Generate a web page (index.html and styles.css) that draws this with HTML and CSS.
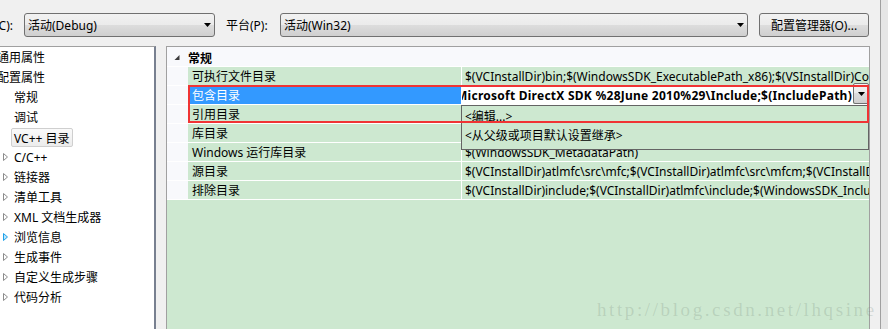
FILE: index.html
```html
<!DOCTYPE html>
<html>
<head>
<meta charset="utf-8">
<link rel="stylesheet" href="styles.css">
</head>
<body>
<div class="main">
  <div class="toolbar">
    <div class="tlabel"><span>配置(C):</span></div>
    <div class="combo c1"><span>活动(Debug)</span><svg class="arr" width="7" height="4" viewBox="0 0 7 4"><polygon points="0,0 7,0 3.5,4" fill="#000"/></svg></div>
    <div class="plabel">平台(P):</div>
    <div class="combo c2"><span>活动(Win32)</span><svg class="arr" width="7" height="4" viewBox="0 0 7 4"><polygon points="0,0 7,0 3.5,4" fill="#000"/></svg></div>
    <div class="btn">配置管理器(O)...</div>
  </div>
  <div class="panes">
    <div class="tree">
      <div class="ti top"><span class="tt">通用属性</span></div>
      <div class="ti top"><span class="tt">配置属性</span></div>
      <div class="ti"><span class="tw"></span><span class="tt">常规</span></div>
      <div class="ti"><span class="tw"></span><span class="tt">调试</span></div>
      <div class="ti"><span class="selbox">VC++ 目录</span></div>
      <div class="ti"><span class="tw"><svg width="5" height="8" viewBox="0 0 5 8"><polygon points="0.5,0.5 4.5,4 0.5,7.5" fill="#fff" stroke="#8c8c8c"/></svg></span><span class="tt">C/C++</span></div>
      <div class="ti"><span class="tw"><svg width="5" height="8" viewBox="0 0 5 8"><polygon points="0.5,0.5 4.5,4 0.5,7.5" fill="#fff" stroke="#8c8c8c"/></svg></span><span class="tt">链接器</span></div>
      <div class="ti"><span class="tw"><svg width="5" height="8" viewBox="0 0 5 8"><polygon points="0.5,0.5 4.5,4 0.5,7.5" fill="#fff" stroke="#8c8c8c"/></svg></span><span class="tt">清单工具</span></div>
      <div class="ti"><span class="tw"><svg width="5" height="8" viewBox="0 0 5 8"><polygon points="0.5,0.5 4.5,4 0.5,7.5" fill="#fff" stroke="#8c8c8c"/></svg></span><span class="tt">XML 文档生成器</span></div>
      <div class="ti"><span class="tw"><svg width="5" height="8" viewBox="0 0 5 8"><polygon points="0.5,0.5 4.5,4 0.5,7.5" fill="#bfe6fb" stroke="#1ca0e8"/></svg></span><span class="tt">浏览信息</span></div>
      <div class="ti"><span class="tw"><svg width="5" height="8" viewBox="0 0 5 8"><polygon points="0.5,0.5 4.5,4 0.5,7.5" fill="#fff" stroke="#8c8c8c"/></svg></span><span class="tt">生成事件</span></div>
      <div class="ti"><span class="tw"><svg width="5" height="8" viewBox="0 0 5 8"><polygon points="0.5,0.5 4.5,4 0.5,7.5" fill="#fff" stroke="#8c8c8c"/></svg></span><span class="tt">自定义生成步骤</span></div>
      <div class="ti"><span class="tw"><svg width="5" height="8" viewBox="0 0 5 8"><polygon points="0.5,0.5 4.5,4 0.5,7.5" fill="#fff" stroke="#8c8c8c"/></svg></span><span class="tt">代码分析</span></div>
    </div>
    <div class="grid">
      <div class="cat"><span class="gut"><svg width="6" height="5" viewBox="0 0 6 5"><polygon points="5.5,0 5.5,5 0.5,5" fill="#3c3c3c"/></svg></span><b>常规</b></div>
      <div class="row"><span class="gut"></span><span class="name">可执行文件目录</span><span class="val">$(VCInstallDir)bin;$(WindowsSDK_ExecutablePath_x86);$(VSInstallDir)Common7\Tools\bin;$(VSInstallDir)Common7\tools;$(VSInstallDir)Common7\ide;$(ProgramFiles)\HTML Help Workshop</span></div>
      <div class="row sel"><span class="gut"></span><span class="name">包含目录</span><span class="val edit"><span class="etext"><span>C:\Program Files (x86)\Microsoft DirectX SDK %28June 2010%29\Include;$(IncludePath)</span></span><span class="dbtn"><svg width="7" height="4" viewBox="0 0 7 4"><polygon points="0,0 7,0 3.5,4" fill="#000"/></svg></span></span></div>
      <div class="row"><span class="gut"></span><span class="name">引用目录</span><span class="val">$(VCInstallDir)atlmfc\lib;$(VCInstallDir)lib</span></div>
      <div class="row"><span class="gut"></span><span class="name">库目录</span><span class="val">$(VCInstallDir)lib;$(VCInstallDir)atlmfc\lib;$(WindowsSDK_LibraryPath_x86)</span></div>
      <div class="row"><span class="gut"></span><span class="name">Windows 运行库目录</span><span class="val">$(WindowsSDK_MetadataPath)</span></div>
      <div class="row"><span class="gut"></span><span class="name">源目录</span><span class="val">$(VCInstallDir)atlmfc\src\mfc;$(VCInstallDir)atlmfc\src\mfcm;$(VCInstallDir)atlmfc\src\atl;$(VCInstallDir)crt\src</span></div>
      <div class="row"><span class="gut"></span><span class="name">排除目录</span><span class="val">$(VCInstallDir)include;$(VCInstallDir)atlmfc\include;$(WindowsSDK_IncludePath);$(MSBuild_ExecutablePath);$(VCInstallDir)lib</span></div>
      <div class="fill"></div>
      <div class="popup">
        <div class="pi">&lt;编辑...&gt;</div>
        <div class="pi">&lt;从父级或项目默认设置继承&gt;</div>
      </div>
      <div class="redbox"></div>
    </div>
  </div>
</div>
<div class="edge"></div>
<div class="watermark">http://blog.csdn.net/lhqsine</div>
</body>
</html>
```

FILE: styles.css
```css
* { box-sizing: border-box; }
html, body { margin: 0; padding: 0; }
body {
  width: 888px;
  height: 329px;
  overflow: hidden;
  background: #f0f0f0;
  display: flex;
  position: relative;
  font-family: "Noto Sans", "Noto Sans CJK SC", sans-serif;
  font-size: 12px;
  color: #000;
}
.main { width: 880px; flex: none; display: flex; flex-direction: column; }
.edge { flex: 1; border-left: 1px solid #a0a0a0; background: #e6e6e6; }

.toolbar { height: 46px; flex: none; display: flex; align-items: flex-start; padding-top: 13px; }
.tlabel {
  width: 13px; height: 24px; margin-right: 11px;
  display: flex; justify-content: flex-end; align-items: center;
  overflow: hidden; white-space: nowrap;
}
.combo {
  height: 24px;
  border: 1px solid #707070;
  border-radius: 3px;
  background: linear-gradient(#f2f2f2, #ebebeb 50%, #dddddd 50%, #cfcfcf);
  display: flex; align-items: center; justify-content: space-between;
  padding: 0 3px;
  white-space: nowrap;
}
.c1 { width: 191px; }
.c2 { width: 468px; }
.plabel { margin-left: 11px; width: 54px; height: 24px; display: flex; align-items: center; }
.btn {
  margin-left: 11px; width: 110px; height: 24px;
  border: 1px solid #707070; border-radius: 3px;
  background: linear-gradient(#f2f2f2, #ebebeb 50%, #dddddd 50%, #cfcfcf);
  display: flex; align-items: center; justify-content: center;
  white-space: nowrap;
}

.panes { flex: 1; display: flex; min-height: 0; }
.tree {
  width: 156px; flex: none;
  background: #fff;
  border-top: 1px solid #a0a0a0;
  border-right: 2px solid #788090;
  margin-right: 10px;
  overflow: hidden;
}
.ti { height: 20px; display: flex; align-items: center; white-space: nowrap; }
.ti.top .tt { margin-left: -3px; }
.tw { width: 14px; flex: none; display: flex; align-items: center; padding-left: 3px; }
.selbox {
  margin-left: 11px; height: 19px; margin-top: 1px;
  padding: 0 2px;
  border: 1px solid #cfcfcf; border-radius: 2px;
  background: linear-gradient(#fafafa, #ececec);
  display: flex; align-items: center;
}

.grid {
  width: 704px; flex: none;
  border: 1px solid #a0a0a0; border-bottom: none;
  background: #f8f9fc;
  display: flex; flex-direction: column;
  position: relative;
}
.cat { height: 19px; display: flex; align-items: center; flex: none; padding-top: 2px; }
.cat .gut { display: flex; align-items: center; padding-left: 7px; }
.gut { width: 21px; flex: none; }
.row { height: 19px; flex: none; display: flex; border-top: 1px solid #fff; line-height: 20px; }
.name { width: 273px; flex: none; background: #cde8d0; padding-left: 4px; white-space: nowrap; overflow: hidden; }
.val {
  flex: 1; min-width: 0; background: #cde8d0;
  border-left: 1px solid #fff; padding-left: 3px;
  overflow: hidden; white-space: nowrap;
}
.sel .name { background: #3399ff; color: #fff; }
.val.edit { padding-left: 0; display: flex; overflow: visible; }
.etext {
  flex: 1; min-width: 0; background: #fff;
  display: flex; justify-content: flex-end;
  overflow: hidden; font-weight: bold; padding-right: 1px;
  letter-spacing: 0.25px;
}
.dbtn {
  width: 16px; height: 21px; margin-top: -3px; flex: none;
  border: 1px solid #707070; border-radius: 2px;
  background: linear-gradient(#f2f2f2, #ebebeb 50%, #dddddd 50%, #cfcfcf);
  display: flex; align-items: center; justify-content: center;
}
.fill { flex: 1; background: #cde8d0; border-top: 1px solid #fff; }

.popup {
  position: absolute; left: 294px; top: 58px;
  width: 408px; height: 45px;
  border: 1px solid #646464;
  background: #cde8d0;
  padding-top: 1px;
}
.pi { height: 19px; line-height: 19px; padding-left: 3px; white-space: nowrap; }
.redbox {
  position: absolute; left: 21px; top: 38px;
  width: 681px; height: 38px;
  border: 2px solid #f03434;
}
.watermark {
  position: absolute; left: 597px; top: 299px;
  font-family: "Liberation Serif", serif; font-size: 19px;
  letter-spacing: 2.6px;
  color: rgba(110, 130, 115, 0.22);
  white-space: nowrap;
}
```
